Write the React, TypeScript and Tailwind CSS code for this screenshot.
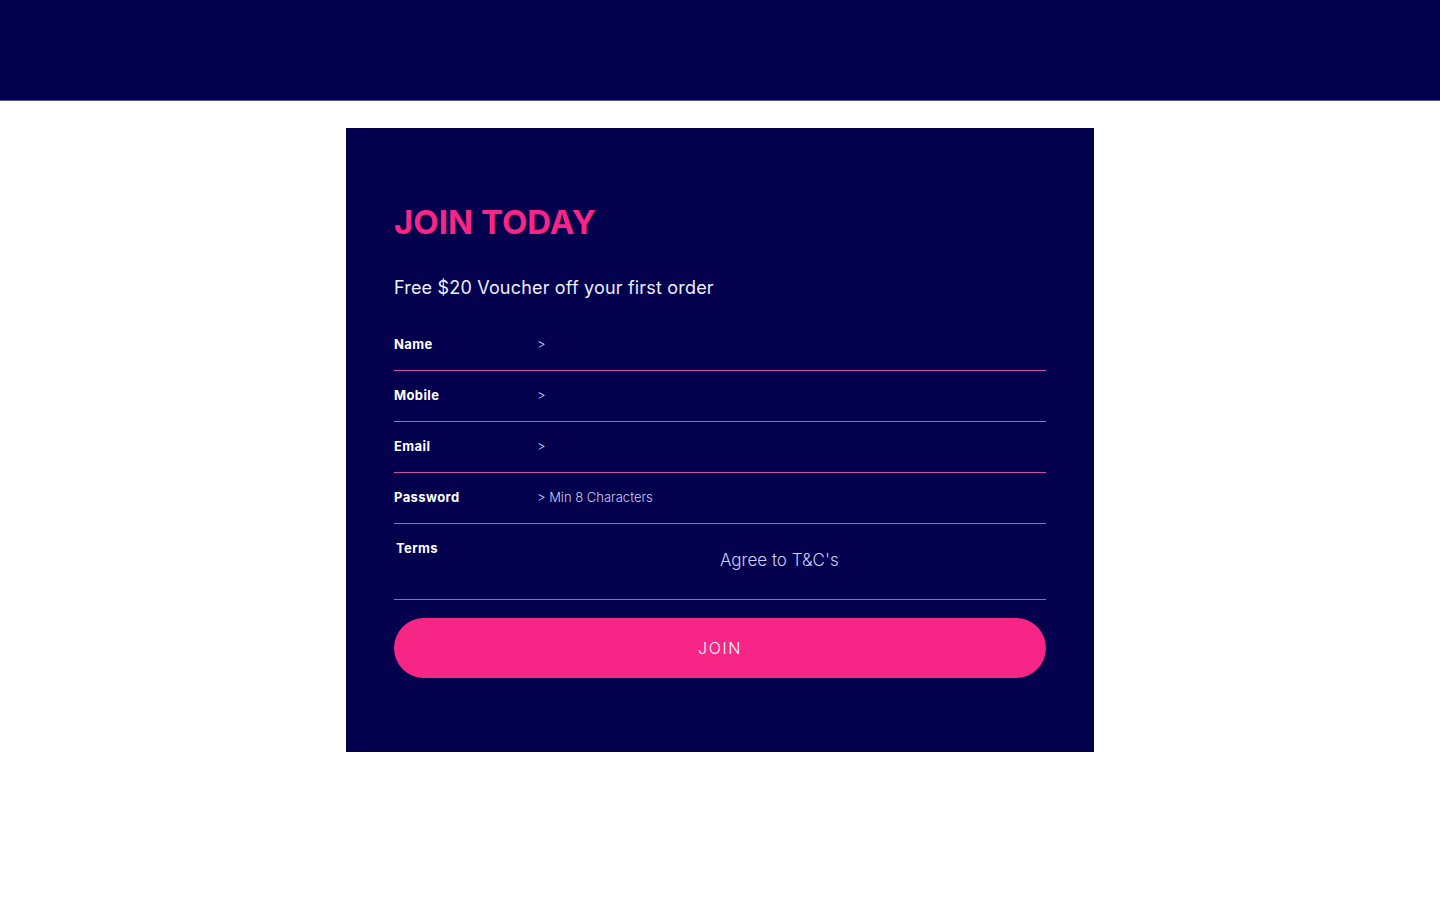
export default function App() {
  const fields = [
    { label: "Name", hint: ">" },
    { label: "Mobile", hint: ">" },
    { label: "Email", hint: ">" },
    { label: "Password", hint: "> Min 8 Characters" },
  ];

  return (
    <div className="min-h-[900px] bg-white" style={{ fontFamily: "Inter, 'Open Sans', sans-serif" }}>
      {/* Top bar */}
      <header className="h-[101px] bg-[#03004e] border-b border-[#5a5890]" />

      {/* Join card */}
      <div className="mx-auto mt-[27px] w-[748px] bg-[#03004e] px-12 pt-[74px] pb-[74px]">
        <h1 className="text-[33px] leading-[40px] font-bold text-[#f72585]">JOIN TODAY</h1>
        <p className="mt-8 text-[18px] leading-[28px] tracking-[0.01em] text-[#eeeeff]">
          Free $20 Voucher off your first order
        </p>

        <form className="mt-[18px]">
          {fields.map((f) => (
            <div key={f.label} className="flex h-[51px] items-center border-b border-[#d24fae]">
              <label className="w-[143px] text-[13px] font-bold tracking-[0.03em] text-white">{f.label}</label>
              <span className="text-[13px] font-light text-[#d0cef2]">{f.hint}</span>
            </div>
          ))}

          <div className="flex h-[76px] border-b border-[#d24fae]">
            <label className="w-[326px] pl-[2px] pt-[15px] text-[13px] leading-[18px] font-bold tracking-[0.03em] text-white">
              Terms
            </label>
            <span className="pt-[25px] text-[17px] leading-[22px] font-light text-[#d0cef2]">Agree to T&amp;C's</span>
          </div>

          <button
            type="button"
            className="mt-[18px] h-[60px] w-full rounded-full bg-[#f72585] text-[16px] font-light tracking-[0.1em] text-white"
          >
            JOIN
          </button>
        </form>
      </div>
    </div>
  );
}
